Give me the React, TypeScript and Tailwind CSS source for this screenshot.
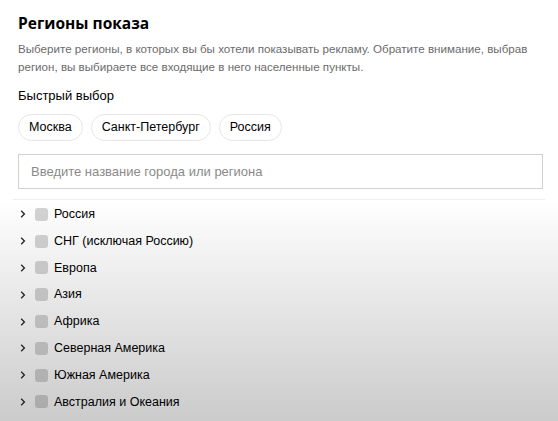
import React, { useState } from 'react';

const quick = ['Москва', 'Санкт-Петербург', 'Россия'];

const regions = [
  'Россия',
  'СНГ (исключая Россию)',
  'Европа',
  'Азия',
  'Африка',
  'Северная Америка',
  'Южная Америка',
  'Австралия и Океания',
];

const Chevron: React.FC = () => (
  <svg width="8" height="10" viewBox="0 0 8 10" className="shrink-0">
    <path d="M2.2 1.8 L5.4 5 L2.2 8.2" fill="none" stroke="#222" strokeWidth="1.3" />
  </svg>
);

const App: React.FC = () => {
  const [query, setQuery] = useState('');

  return (
    <div className="min-h-screen flex flex-col bg-white font-['Liberation_Sans',Arial,sans-serif] text-[#222]">
      <div className="px-[18px] pt-[12px]">
        <h1 className="font-['Open_Sans',sans-serif] text-[15.5px] font-bold leading-[22px] text-black">
          Регионы показа
        </h1>

        {/* description */}
        <p className="mt-[6px] whitespace-nowrap text-[11.6px] leading-[18px] text-[#6b6b6b]">
          Выберите регионы, в которых вы бы хотели показывать рекламу. Обратите внимание, выбрав
          <br />
          регион, вы выбираете все входящие в него населенные пункты.
        </p>

        <div className="mt-[11px] text-[13px] leading-[18px] text-black">Быстрый выбор</div>

        <div className="mt-[9px] flex gap-[8px]">
          {quick.map((q) => (
            <button
              key={q}
              className="h-[27px] px-[10px] rounded-full border border-[#e6e6e6] bg-white text-[12.5px] text-black"
            >
              {q}
            </button>
          ))}
        </div>

        <input
          value={query}
          onChange={(e) => setQuery(e.target.value)}
          placeholder="Введите название города или региона"
          className="mt-[13px] w-[525px] h-[35px] border border-[#d0d0d0] px-[12px] text-[13px] text-black placeholder:text-[#8a8a8a] outline-none"
        />
      </div>

      {/* region tree */}
      <div className="mt-[10px] mx-[13px] border-t border-[#eeeeee]" />
      <div className="flex-1 flex flex-col pt-[1px] bg-gradient-to-b from-white to-[#cbcbcb]">
        {regions.map((r) => (
          <div key={r} className="h-[26.8px] flex items-center pl-[19px]">
            <Chevron />
            <span className="ml-[8px] w-[13px] h-[13px] rounded-[3px] bg-black/[0.17]" />
            <span className="ml-[6px] text-[12.5px] text-black">{r}</span>
          </div>
        ))}
      </div>
    </div>
  );
};

export default App;
